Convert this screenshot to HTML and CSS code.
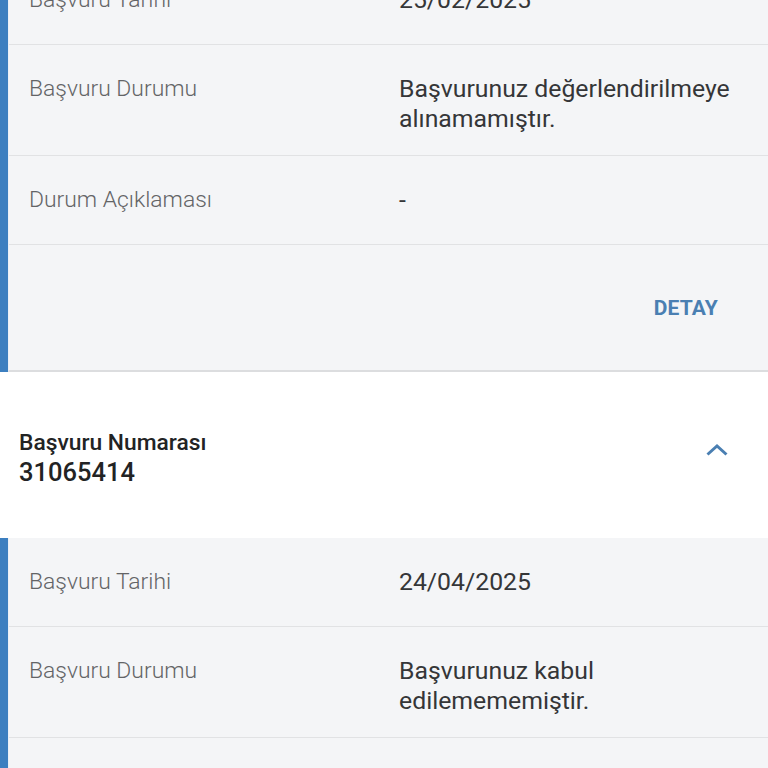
FILE: index.html
```html
<!DOCTYPE html>
<html lang="tr">
<head>
<meta charset="utf-8">
<link rel="stylesheet" href="styles.css">
</head>
<body>
<div class="page">
  <section class="panel">
    <div class="bar"></div>
    <div class="panel-body">
      <div class="row"><div class="label">Başvuru Tarihi</div><div class="value">25/02/2025</div></div>
      <div class="row"><div class="label">Başvuru Durumu</div><div class="value">Başvurunuz değerlendirilmeye alınamamıştır.</div></div>
      <div class="row"><div class="label">Durum Açıklaması</div><div class="value">-</div></div>
      <div class="actions"><span class="detay">DETAY</span></div>
    </div>
  </section>
  <header class="app-head">
    <div class="head-text">
      <div class="head-title">Başvuru Numarası</div>
      <div class="head-number">31065414</div>
    </div>
    <svg class="chevron" width="24" height="14" viewBox="0 0 24 14"><polyline points="2.5,11.5 12,3 21.5,11.5" fill="none" stroke="#4a7fb2" stroke-width="3"/></svg>
  </header>
  <section class="panel">
    <div class="bar"></div>
    <div class="panel-body">
      <div class="row"><div class="label">Başvuru Tarihi</div><div class="value">24/04/2025</div></div>
      <div class="row"><div class="label">Başvuru Durumu</div><div class="value">Başvurunuz kabul edilemememiştir.</div></div>
      <div class="row"><div class="label">Durum Açıklaması</div><div class="value">-</div></div>
      <div class="actions"><span class="detay">DETAY</span></div>
    </div>
  </section>
</div>
</body>
</html>
```
FILE: styles.css
```css
html, body {
  margin: 0;
  padding: 0;
  background: #ffffff;
  overflow: hidden;
}
body {
  font-family: Roboto, "Noto Sans", "Liberation Sans", sans-serif;
}
.page {
  margin-top: -44px;
}
.panel {
  display: flex;
  align-items: stretch;
}
.bar {
  width: 8px;
  flex: none;
  background: #3c7fc0;
}
.panel-body {
  flex: 1;
  background: #f4f5f7;
  border-left: 1px solid #e9f0f7;
  border-bottom: 2px solid #dcdddf;
}
.row {
  display: grid;
  grid-template-columns: 370px 1fr;
  box-sizing: border-box;
  min-height: 89px;
  padding: 29px 20px 21px 20px;
  border-bottom: 1px solid #e1e2e4;
  line-height: 30px;
}
.label {
  color: #636466;
  font-size: 22.9px;
  font-weight: 300;
}
.value {
  color: #353638;
  font-size: 24.8px;
}
.actions {
  height: 125px;
  display: flex;
  align-items: center;
  justify-content: flex-end;
  padding-right: 50px;
}
.detay {
  color: #4a7fb2;
  font-size: 21px;
  font-weight: 700;
  letter-spacing: 0.2px;
}
.app-head {
  height: 166px;
  display: flex;
  align-items: center;
  justify-content: space-between;
  padding: 0 39px 0 19px;
  background: #ffffff;
}
.head-text {
  margin-top: 5px;
}
.head-title {
  font-size: 22.8px;
  line-height: 28px;
  font-weight: 500;
  color: #222324;
}
.head-number {
  font-size: 25.5px;
  line-height: 30px;
  font-weight: 500;
  color: #222324;
}
.chevron {
  margin-top: -10px;
}
```
